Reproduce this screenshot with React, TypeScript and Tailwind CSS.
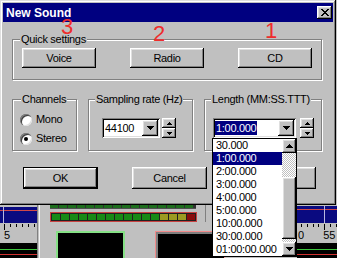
import React from 'react';

// classic 3D edges
const raised =
  'bg-[#c0c0c0] shadow-[inset_-1px_-1px_#000,inset_1px_1px_#fff,inset_-2px_-2px_#808080,inset_2px_2px_#dfdfdf]';
const sunken =
  'bg-white shadow-[inset_1px_1px_#808080,inset_-1px_-1px_#fff,inset_2px_2px_#000,inset_-2px_-2px_#dfdfdf]';

const DownArrow = () => (
  <svg width="7" height="4" viewBox="0 0 7 4">
    <path d="M0 0h7v1H0zM1 1h5v1H1zM2 2h3v1H2zM3 3h1v1H3z" fill="#000" />
  </svg>
);
const UpArrow = () => (
  <svg width="7" height="4" viewBox="0 0 7 4">
    <path d="M3 0h1v1H3zM2 1h3v1H2zM1 2h5v1H1zM0 3h7v1H0z" fill="#000" />
  </svg>
);
const TinyUp = () => (
  <svg width="5" height="3" viewBox="0 0 5 3">
    <path d="M2 0h1v1H2zM1 1h3v1H1zM0 2h5v1H0z" fill="#000" />
  </svg>
);
const TinyDown = () => (
  <svg width="5" height="3" viewBox="0 0 5 3">
    <path d="M0 0h5v1H0zM1 1h3v1H1zM2 2h1v1H2z" fill="#000" />
  </svg>
);

function Group({ label, className = '', legend = 'ml-[7px]', children }: { label: string; className?: string; legend?: string; children: React.ReactNode }) {
  return (
    <fieldset className={`border border-[#808080] shadow-[inset_1px_1px_#fff,1px_1px_#fff] ${className}`}>
      <legend className={`${legend} px-[1px] bg-[#c0c0c0] leading-[12px]`}>{label}</legend>
      {children}
    </fieldset>
  );
}

function Btn({ children, className = '' }: { children?: React.ReactNode; className?: string }) {
  return <div className={`${raised} flex items-center justify-center ${className}`}>{children}</div>;
}

function Radio({ checked }: { checked?: boolean }) {
  return (
    <span className="w-[12px] h-[12px] rounded-full bg-white shadow-[inset_1px_1px_#808080,inset_2px_2px_#404040,inset_-1px_-1px_#dfdfdf] flex items-center justify-center">
      {checked && <span className="w-[4px] h-[4px] rounded-full bg-black" />}
    </span>
  );
}

function Spin({ className = '' }: { className?: string }) {
  return (
    <div className={`flex flex-col ${className}`}>
      <Btn className="w-[14px] h-[10px]"><TinyUp /></Btn>
      <Btn className="w-[14px] h-[10px]"><TinyDown /></Btn>
    </div>
  );
}

const LENGTHS = ['30.000', '1:00.000', '2:00.000', '3:00.000', '4:00.000', '5:00.000', '10:00.000', '30:00.000', '01:00:00.000'];

const LEDS = ['g', 'g', 'g', 'g', 'g', 'g', 'g', 'g', 'g', 'g', 'g', 'g', 'y', 'y', 'y', 'r'];
const LED_COLOR: Record<string, string> = { g: 'bg-[#168a16]', y: 'bg-[#9c9a22]', r: 'bg-[#880c0c]' };

function Ruler({ ticks, long }: { ticks: number[]; long: number[] }) {
  return (
    <svg width="40" height="7" className="block">
      {ticks.map(x => (
        <rect key={x} x={x} y={1} width={1} height={long.includes(x) ? 6 : 3} fill="#000" />
      ))}
    </svg>
  );
}

function Track() {
  return (
    <div className="h-[15px] bg-black pt-[6px]">
      <div className="h-[1px] bg-[#3cc43c]" />
      <div className="h-[1px] mt-[4px] bg-[#d03030]" />
    </div>
  );
}

export default function App() {
  return (
    <div className="relative w-[337px] h-[258px] overflow-hidden bg-[#c0c0c0] font-['Liberation_Sans',Arial,sans-serif] text-[11px] tracking-[-0.3px] text-black">
      {/* Dialog window */}
      <div className="w-[336px] h-[205px] p-[3px] flex flex-col shadow-[inset_-1px_-1px_#000,inset_1px_1px_#dfdfdf,inset_-2px_-2px_#808080,inset_2px_2px_#fff]">
        <div className="h-[19px] bg-[#000080] flex items-center justify-between pl-[3px] pr-[1px]">
          <span className="text-white font-bold text-[12px] tracking-normal leading-none">New Sound</span>
          <Btn className="w-[15px] h-[13px]">
            <svg width="8" height="7" viewBox="0 0 8 7">
              <path d="M0 0h2v1H0zM6 0h2v1H6zM1 1h2v1H1zM5 1h2v1H5zM2 2h4v1H2zM3 3h2v1H3zM2 4h4v1H2zM1 5h2v1H1zM5 5h2v1H5zM0 6h2v1H0zM6 6h2v1H6z" fill="#000" />
            </svg>
          </Btn>
        </div>

        <div className="flex-1 flex flex-col pl-[9px]">
          <Group label="Quick settings" className="mt-[11px] w-[310px] h-[47px]" legend="ml-[7px]">
            <div className="flex gap-[34px] pl-[9px] pt-[3px]">
              <Btn className="w-[74px] h-[20px]">Voice</Btn>
              <Btn className="w-[74px] h-[20px]">Radio</Btn>
              <Btn className="w-[74px] h-[20px]">CD</Btn>
            </div>
          </Group>

          <div className="flex gap-[11px] mt-[13px]">
            <Group label="Channels" className="w-[65px] h-[58px]" legend="ml-[8px]">
              <div className="flex flex-col pt-[5px] pl-[7px]">
                <div className="flex items-center gap-[4px] h-[19px]"><Radio /> Mono</div>
                <div className="flex items-center gap-[4px] h-[19px]"><Radio checked /> Stereo</div>
              </div>
            </Group>
            <Group label="Sampling rate (Hz)" className="w-[105px] h-[58px]" legend="ml-[6px]">
              <div className="flex pt-[13px] pl-[13px]">
                <div className={`${sunken} w-[58px] h-[20px] flex items-center justify-between pl-[3px] pr-[2px]`}>
                  <span>44100</span>
                  <Btn className="w-[16px] h-[16px]"><DownArrow /></Btn>
                </div>
                <Spin className="ml-[2px]" />
              </div>
            </Group>
            <Group label="Length (MM:SS.TTT)" className="w-[118px] h-[58px]" legend="ml-[6px]">
              <div className="flex pt-[13px] pl-[8px]">
                <div className={`${sunken} w-[83px] h-[20px] flex items-center justify-between pl-[2px] pr-[2px]`}>
                  <span className="px-[1px] h-[14px] leading-[14px] bg-[#000080] text-white">1:00.000</span>
                  <Btn className="w-[16px] h-[16px]"><DownArrow /></Btn>
                </div>
                <Spin className="ml-[4px]" />
              </div>
            </Group>
          </div>

          <div className="flex gap-[34px] ml-[11px] mt-[16px]">
            <div className="w-[75px] h-[22px] border border-black">
              <Btn className="w-full h-full">OK</Btn>
            </div>
            <Btn className="w-[75px] h-[22px]">Cancel</Btn>
            <Btn className="w-[75px] h-[22px]">Help</Btn>
          </div>
        </div>
      </div>

      {/* Application behind the dialog */}
      <div className="flex h-[53px]">
        <div className="w-[37px] flex flex-col">
          <div className="h-[2px]" />
          <div className="relative h-[16px] bg-[#0a0a80] pt-[3px]">
            <div className="h-[1px] bg-[#d04848]" />
            <div className="absolute left-[3px] top-0 bottom-0 w-[1px] bg-[#b8b8e0]" />
          </div>
          <div className="h-[20px]">
            <Ruler ticks={[4, 10, 16, 22, 28, 34]} long={[4]} />
            <div className="pl-[4px] leading-[11px]">5</div>
          </div>
          <Track />
        </div>
        <div className="w-[3px] border-l border-[#808080] border-r border-r-[#f4f4f4]" />

        <div className="w-[257px] flex flex-col">
          <div className="flex h-[20px]">
            <div className="w-[166px] border-r border-[#808080] pl-[10px]">
              <div className="w-[146px] h-[4px] flex gap-[1px] bg-[#303030] border-b border-[#505050]">
                {LEDS.map((_, i) => (
                  <div key={i} className="w-[8px] h-full bg-[#1e6e1e]" />
                ))}
              </div>
              <div className="w-[147px] h-[10px] mt-[3px] flex gap-[1px] p-[1px] border border-[#c84040] bg-[#202020]">
                {LEDS.map((c, i) => (
                  <div key={i} className={`w-[8px] h-full ${LED_COLOR[c]}`} />
                ))}
              </div>
            </div>
          </div>
          <div className="h-[1px] bg-white" />
          <div className="flex gap-[30px] pl-[16px] pt-[9px]">
            <div className="w-[69px] h-[30px] border-2 border-[#86e086] bg-black" />
            <div className="w-[70px] h-[30px] border border-[#f08a8a] bg-black shadow-[inset_2px_2px_#808080]" />
          </div>
        </div>

        <div className="w-[40px] flex flex-col">
          <div className="h-[1px]" />
          <div className="relative h-[17px] bg-[#0a0a80] pt-[3px]">
            <div className="h-[1px] bg-[#d04848]" />
            <div className="absolute left-[27px] top-0 bottom-0 w-[1px] bg-[#b8b8e0]" />
          </div>
          <div className="h-[20px]">
            <Ruler ticks={[4, 10, 16, 21, 27, 33, 39]} long={[27]} />
            <div className="flex justify-between pl-[1px] pr-[2px] leading-[11px]">
              <span>0</span>
              <span>55</span>
            </div>
          </div>
          <Track />
        </div>
      </div>

      {/* Red step numbers written over the dialog */}
      <span className="absolute left-[61px] top-[16px] text-[22px] leading-[22px] tracking-normal text-[#ee2c2c]">3</span>
      <span className="absolute left-[153px] top-[23px] text-[22px] leading-[22px] tracking-normal text-[#ee2c2c]">2</span>
      <span className="absolute left-[265px] top-[20px] text-[22px] leading-[22px] tracking-normal text-[#ee2c2c]">1</span>

      {/* Open drop-down list */}
      <div className="absolute left-[212px] top-[138px] w-[85px] h-[119px] border border-black bg-white flex">
        <div className="w-[69px] flex flex-col">
          {LENGTHS.map((t, i) => (
            <div key={t} className={`h-[13px] leading-[13px] pl-[3px] whitespace-nowrap ${i === 1 ? 'bg-[#000080] text-white' : ''}`}>
              {t}
            </div>
          ))}
        </div>
        <div className="w-[14px] flex flex-col">
          <Btn className="h-[14px]"><UpArrow /></Btn>
          <div className="h-[24px] bg-[image:repeating-conic-gradient(#c0c0c0_0%_25%,#ffffff_0%_50%)] bg-[length:2px_2px]" />
          <Btn className="h-[62px]" />
          <div className="h-[3px] bg-[image:repeating-conic-gradient(#c0c0c0_0%_25%,#ffffff_0%_50%)] bg-[length:2px_2px]" />
          <Btn className="h-[14px]"><DownArrow /></Btn>
        </div>
      </div>
    </div>
  );
}
